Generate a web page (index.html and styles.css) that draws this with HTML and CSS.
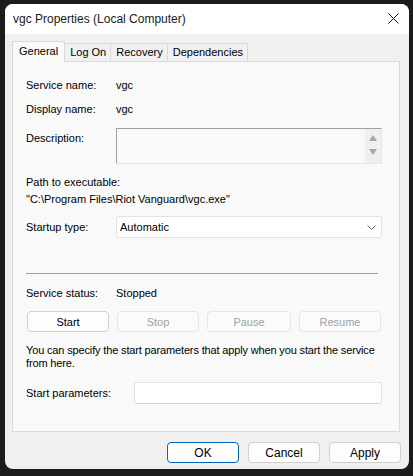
FILE: index.html
```html
<!DOCTYPE html>
<html lang="en">
<head>
    <meta charset="UTF-8">
    <title>vgc Properties (Local Computer)</title>
    <link rel="stylesheet" href="styles.css">
</head>
<body>
<div class="window">
    <div class="titlebar">
        <span class="title">vgc Properties (Local Computer)</span>
        <svg class="close" width="11" height="11" viewBox="0 0 11 11">
            <path d="M0.5 0.5L10.5 10.5M10.5 0.5L0.5 10.5" stroke="#1a1a1a" stroke-width="1"/>
        </svg>
    </div>
    <div class="body">
        <div class="tabs">
            <div class="tab active">General</div>
            <div class="tab">Log On</div>
            <div class="tab">Recovery</div>
            <div class="tab">Dependencies</div>
        </div>
        <div class="panel">
            <div class="field">
                <label>Service name:</label>
                <span>vgc</span>
            </div>
            <div class="field gap8">
                <label>Display name:</label>
                <span>vgc</span>
            </div>
            <div class="field desc-row">
                <label>Description:</label>
                <div class="desc-box">
                    <div class="desc-text"></div>
                    <div class="scroll">
                        <svg width="8" height="6" viewBox="0 0 8 6"><path d="M4 0L8 6H0Z" fill="#a6a6a6"/></svg>
                        <svg width="8" height="6" viewBox="0 0 8 6"><path d="M0 0H8L4 6Z" fill="#a6a6a6"/></svg>
                    </div>
                </div>
            </div>
            <div class="path">
                <div>Path to executable:</div>
                <div>"C:\Program Files\Riot Vanguard\vgc.exe"</div>
            </div>
            <div class="field startup-row">
                <label>Startup type:</label>
                <div class="select">
                    <span>Automatic</span>
                    <svg width="9" height="5" viewBox="0 0 9 5"><path d="M0.5 0.5L4.5 4.5L8.5 0.5" fill="none" stroke="#666" stroke-width="1"/></svg>
                </div>
            </div>
            <div class="divider"></div>
            <div class="field status-row">
                <label>Service status:</label>
                <span>Stopped</span>
            </div>
            <div class="actions">
                <button class="btn">Start</button>
                <button class="btn disabled">Stop</button>
                <button class="btn disabled wide">Pause</button>
                <button class="btn disabled">Resume</button>
            </div>
            <p class="help">You can specify the start parameters that apply when you start the service from here.</p>
            <div class="field params-row">
                <label>Start parameters:</label>
                <div class="input"></div>
            </div>
        </div>
        <div class="footer">
            <button class="btn ok">OK</button>
            <button class="btn">Cancel</button>
            <button class="btn">Apply</button>
        </div>
    </div>
</div>
</body>
</html>
```

FILE: styles.css
```css
*{
    padding: 0;
    margin: 0;
    box-sizing: border-box;
}
body{
    background-color: #1c1c1c;
    font-family: "Liberation Sans", Arial, sans-serif;
    font-size: 11px;
    color: #000;
}
.window{
    width: 404px;
    height: 465px;
    margin: 4px 0 0 5px;
    border-radius: 8px;
    overflow: hidden;
    background-color: #f0f0f0;
}
.titlebar{
    height: 30px;
    background-color: #fff;
    display: flex;
    align-items: center;
    justify-content: space-between;
    padding: 0 10px 0 8px;
}
.title{
    font-size: 12px;
    color: #1a1a1a;
}
.close{
    margin-top: -2px;
}
.body{
    padding: 7px 9px 0 7px;
}
.tabs{
    display: flex;
    align-items: flex-end;
    height: 20px;
}
.tab{
    height: 18px;
    line-height: 17px;
    padding: 0 4px 0 5px;
    border: 1px solid #d9d9d9;
    border-bottom: none;
    margin-left: -1px;
    background-color: #f0f0f0;
}
.tab.active{
    position: relative;
    height: 21px;
    line-height: 19px;
    margin-left: 0;
    margin-bottom: -1px;
    padding: 0 6px;
    background-color: #f9f9f9;
}
.panel{
    height: 371px;
    border: 1px solid #dadada;
    background-color: #f9f9f9;
    padding: 15px 17px 0 13px;
}
.field{
    display: flex;
    align-items: center;
    height: 16px;
}
.field label{
    width: 90px;
    flex-shrink: 0;
}
.gap8{
    margin-top: 8px;
}
.desc-row{
    margin-top: 11px;
    height: 36px;
    align-items: flex-start;
}
.desc-row label{
    padding-top: 4px;
}
.desc-box{
    flex: 1;
    height: 36px;
    display: flex;
    border: 1px solid;
    border-color: #a0a0a0 #e6e6e6 #e6e6e6 #a0a0a0;
}
.desc-text{
    flex: 1;
    background-color: #f9f9f9;
}
.scroll{
    width: 16px;
    background-color: #efefef;
    display: flex;
    flex-direction: column;
    align-items: center;
    justify-content: space-between;
    padding: 6px 0 8px;
}
.path{
    margin-top: 10px;
    line-height: 17px;
}
.startup-row{
    margin-top: 8px;
    height: 22px;
}
.select{
    flex: 1;
    height: 22px;
    background-color: #fff;
    border: 1px solid #e2e2e2;
    border-radius: 3px;
    display: flex;
    align-items: center;
    justify-content: space-between;
    padding: 0 5px 0 3px;
}
.divider{
    margin-top: 35px;
    width: 352px;
    height: 1px;
    background-color: #a0a0a0;
}
.status-row{
    margin-top: 11px;
}
.actions{
    display: flex;
    gap: 8px;
    margin-top: 10px;
    padding-left: 1px;
}
.btn{
    width: 82px;
    height: 21px;
    border: 1px solid #d0d0d0;
    border-radius: 4px;
    background-color: #fdfdfd;
    font-family: "Liberation Sans", Arial, sans-serif;
    font-size: 11px;
    color: #000;
}
.btn.wide{
    width: 84px;
}
.btn.disabled{
    color: #a0a0a0;
    border-color: #e5e5e5;
    background-color: #fbfbfb;
}
.help{
    margin: 12px -10px 0 0;
    line-height: 13px;
    letter-spacing: -0.15px;
}
.params-row{
    margin-top: 12px;
    height: 22px;
}
.params-row label{
    width: 108px;
}
.input{
    flex: 1;
    height: 22px;
    background-color: #fff;
    border: 1px solid #e2e2e2;
    border-bottom-color: #cfcfcf;
    border-radius: 3px;
}
.footer{
    display: flex;
    justify-content: flex-end;
    gap: 9px;
    margin: 10px -1px 0 0;
}
.footer .btn{
    width: 72px;
    height: 21px;
    font-size: 12px;
}
.footer .ok{
    border-color: #0067c0;
}
```
